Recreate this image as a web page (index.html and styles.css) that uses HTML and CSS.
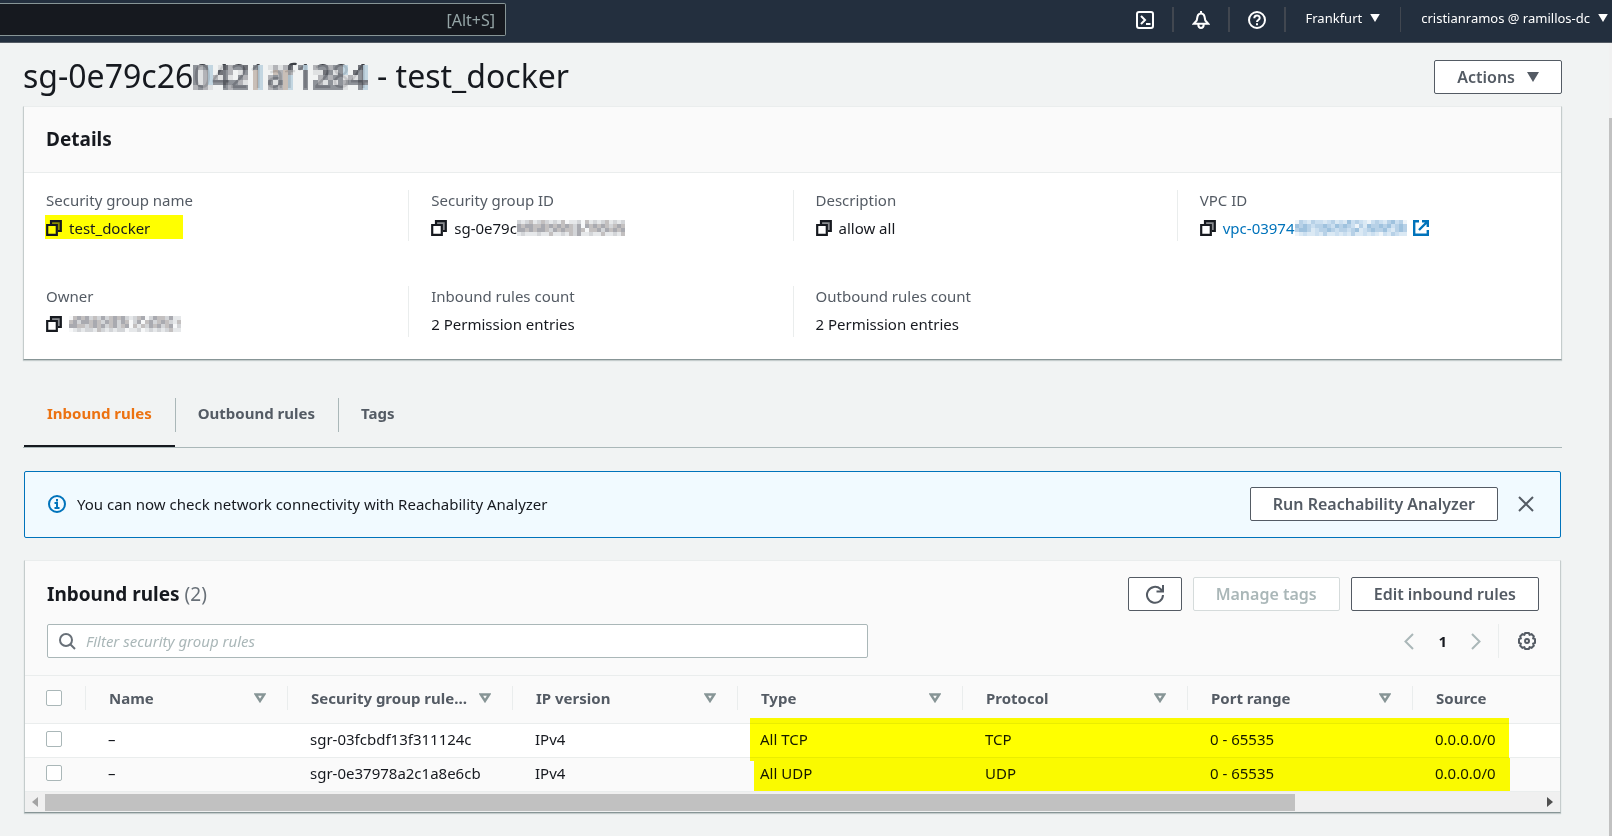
FILE: index.html
```html
<!DOCTYPE html>
<html lang="en">
<head>
<meta charset="utf-8">
<title>Security group</title>
<link rel="stylesheet" href="styles.css">
</head>
<body>
<svg class="defs" aria-hidden="true">
  <symbol id="copy" viewBox="0 0 16 16"><path d="M5 4V1.2h9.8V11H12" fill="#8a8c90" stroke="currentColor" stroke-width="2.200"/><path d="M1.2 5h9.6v9.8H1.2z" fill="#fff" stroke="currentColor" stroke-width="2.200"/></symbol>
  <symbol id="copy-marked" viewBox="0 0 16 16"><path d="M5 4V1.2h9.8V11H12" fill="#8a8c00" stroke="currentColor" stroke-width="2.200"/><path d="M1.2 5h9.6v9.8H1.2z" fill="#ff0" stroke="currentColor" stroke-width="2.200"/></symbol>
  <symbol id="sort" viewBox="0 0 12 10"><path d="M1.800 1.500h8.400L6 8z" fill="none" stroke="currentColor" stroke-width="2.400"/></symbol>
  <symbol id="caret" viewBox="0 0 12 10"><path d="M0 0h12L6 10z" fill="currentColor"/></symbol>
</svg>

<header class="topbar">
  <input class="top-search" type="text" placeholder="[Alt+S]" aria-label="Search">
  <nav class="top-nav">
    <button class="top-icon" aria-label="CloudShell"><svg width="18" height="18" viewBox="0 0 18 18" fill="none" stroke="currentColor" stroke-width="2"><rect x="1" y="1" width="16" height="16" rx="2"/><path d="M5 5l4 4-4 4M10 13h4.500"/></svg></button>
    <button class="top-icon" aria-label="Notifications"><svg width="18" height="18" viewBox="0 0 18 18" fill="none" stroke="currentColor" stroke-width="2"><path d="M9 0v2M1.800 12.800h14.400L13.300 9.500 12.500 5.500C12 3.500 10.800 2.500 9 2.500S6 3.500 5.500 5.500L4.700 9.500zM6.300 13.500c0 4.600 5.400 4.600 5.400 0"/></svg></button>
    <button class="top-icon" aria-label="Help"><svg width="18" height="18" viewBox="0 0 18 18" fill="none" stroke="currentColor" stroke-width="2"><circle cx="9" cy="9" r="8"/><path d="M6.300 7.200C6.300 3.500 11.700 3.600 11.700 7c0 2-2.700 2-2.700 4M9 12.300v2"/></svg></button>
    <button class="top-text">Frankfurt <svg width="10" height="8"><use href="#caret"/></svg></button>
    <button class="top-text user">cristianramos @ ramillos-dc <svg width="10" height="8"><use href="#caret"/></svg></button>
  </nav>
</header>

<div class="page">
<main class="content">
  <div class="title-row">
    <h1>sg-0e79c26<span class="masked">0421af1284<svg class="tiles" data-mosaic="title" data-tile="5"></svg></span> - test_docker</h1>
    <button class="btn actions">Actions <svg width="12" height="10"><use href="#caret"/></svg></button>
  </div>

  <section class="card details">
    <h2 class="card-head">Details</h2>
    <dl class="grid">
      <div class="cell"><dt>Security group name</dt><dd><span class="marked"><svg class="ic" width="16" height="16"><use href="#copy-marked"/></svg>test_docker</span></dd></div>
      <div class="cell"><dt>Security group ID</dt><dd><svg class="ic" width="16" height="16"><use href="#copy"/></svg>sg-0e79c<svg data-mosaic="id" data-tile="4"></svg></dd></div>
      <div class="cell"><dt>Description</dt><dd><svg class="ic" width="16" height="16"><use href="#copy"/></svg>allow all</dd></div>
      <div class="cell"><dt>VPC ID</dt><dd><svg class="ic" width="16" height="16"><use href="#copy"/></svg><a href="#vpc">vpc-03974<svg data-mosaic="vpc" data-tile="4"></svg><svg class="ext" width="16" height="16" viewBox="0 0 16 16" fill="none" stroke="currentColor" stroke-width="2.400"><path d="M6 1.200H1.200v13.600h13.600V10M9 1.200h5.800V7M14.500 1.500L6 10"/></svg></a></dd></div>
      <div class="cell"><dt>Owner</dt><dd><svg class="ic" width="16" height="16"><use href="#copy"/></svg><svg data-mosaic="owner" data-tile="4"></svg></dd></div>
      <div class="cell"><dt>Inbound rules count</dt><dd>2 Permission entries</dd></div>
      <div class="cell"><dt>Outbound rules count</dt><dd>2 Permission entries</dd></div>
    </dl>
  </section>

  <nav class="tabs">
    <a class="tab active" href="#inbound">Inbound rules</a>
    <a class="tab" href="#outbound">Outbound rules</a>
    <a class="tab" href="#tags">Tags</a>
  </nav>

  <div class="alert" role="status">
    <svg width="18" height="18" viewBox="0 0 18 18" fill="none" stroke="currentColor" stroke-width="2"><circle cx="9" cy="9" r="8"/><path d="M9 4v2.500M6.500 8H9v5M6.500 13h5"/></svg>
    <p>You can now check network connectivity with Reachability Analyzer</p>
    <button class="btn">Run Reachability Analyzer</button>
    <button class="plain close" aria-label="Dismiss"><svg width="16" height="16" viewBox="0 0 16 16" stroke="currentColor" stroke-width="2"><path d="M1 1l14 14M15 1L1 15"/></svg></button>
  </div>

  <section class="card rules">
    <div class="rules-head">
      <div class="bar">
        <h2>Inbound rules <span class="count">(2)</span></h2>
        <button class="btn refresh" aria-label="Refresh"><svg width="20" height="20" viewBox="0 0 20 20" fill="none" stroke="currentColor" stroke-width="2"><path d="M18 11A8 8 0 1 1 15.500 5L17.500 7M18 1v6.500h-6.500"/></svg></button>
        <button class="btn" disabled>Manage tags</button>
        <button class="btn">Edit inbound rules</button>
      </div>
      <div class="bar filter-bar">
        <label class="filter"><svg width="17" height="17" viewBox="0 0 17 17" fill="none" stroke="currentColor" stroke-width="2"><circle cx="7" cy="7" r="6"/><path d="M11 11l5 5"/></svg><input type="text" placeholder="Filter security group rules" aria-label="Filter security group rules"></label>
        <div class="pager">
          <button class="plain pale" aria-label="Previous page"><svg width="10" height="17" viewBox="0 0 10 17" fill="none" stroke="currentColor" stroke-width="2"><path d="M9 1L1.500 8.500 9 16"/></svg></button>
          <button class="plain page-no">1</button>
          <button class="plain pale" aria-label="Next page"><svg width="10" height="17" viewBox="0 0 10 17" fill="none" stroke="currentColor" stroke-width="2"><path d="M1 1l7.500 7.500L1 16"/></svg></button>
          <button class="plain gear" aria-label="Settings"><svg width="18" height="18" viewBox="0 0 18 18" fill="none" stroke="currentColor" stroke-width="2"><circle cx="9" cy="9" r="2"/><path d="M7.200 1h3.600l.8 1.800 2-.6 2.200 2.200-.6 2L17 7.200v3.600l-1.800.8.6 2-2.200 2.200-2-.6-.8 1.800H7.200l-.8-1.800-2 .6-2.200-2.200.6-2L1 10.800V7.200l1.800-.8-.6-2 2.200-2.200 2 .6z"/></svg></button>
        </div>
      </div>
    </div>
    <div class="table-wrap">
      <table>
        <colgroup><col class="c-check"><col class="c-name"><col class="c"><col class="c"><col class="c"><col class="c"><col class="c"><col></colgroup>
        <thead><tr>
          <th><input type="checkbox" aria-label="Select all"></th>
          <th><div>Name<svg width="12" height="10"><use href="#sort"/></svg></div></th>
          <th><div>Security group rule…<svg width="12" height="10"><use href="#sort"/></svg></div></th>
          <th><div>IP version<svg width="12" height="10"><use href="#sort"/></svg></div></th>
          <th><div>Type<svg width="12" height="10"><use href="#sort"/></svg></div></th>
          <th><div>Protocol<svg width="12" height="10"><use href="#sort"/></svg></div></th>
          <th><div>Port range<svg width="12" height="10"><use href="#sort"/></svg></div></th>
          <th><div>Source</div></th>
        </tr></thead>
        <tbody>
          <tr><td><input type="checkbox" aria-label="Select sgr-03fcbdf13f311124c"></td><td>–</td><td>sgr-03fcbdf13f311124c</td><td>IPv4</td><td>All TCP</td><td>TCP</td><td>0 - 65535</td><td>0.0.0.0/0</td></tr>
          <tr><td><input type="checkbox" aria-label="Select sgr-0e37978a2c1a8e6cb"></td><td>–</td><td>sgr-0e37978a2c1a8e6cb</td><td>IPv4</td><td>All UDP</td><td>UDP</td><td>0 - 65535</td><td>0.0.0.0/0</td></tr>
        </tbody>
      </table>
      <div class="marker first"></div>
      <div class="marker second"></div>
    </div>
    <div class="hscroll"><svg width="6" height="10"><path d="M6 0v10L0 5z" fill="#a3a3a3"/></svg><div class="track"><div class="thumb"></div></div><svg width="6" height="10"><path d="M0 0v10l6-5z" fill="#505050"/></svg></div>
  </section>
</main>
<div class="vscroll"><div class="vthumb"></div></div>
</div>
<script src="mosaic.js"></script>
</body>
</html>
```
FILE: mosaic.js
```js
// Paints the pixelated masks over private identifiers, one letter per tile.
const colours = {
  K: "#5c5f66", D: "#7f838a", M: "#a8a9ad", T: "#c3b6ad", B: "#bcd2df", L: "#dddee0", ".": "#f1f3f3",
  a: "#a9aab0", b: "#c3c0c0", c: "#d3d5d8", d: "#e6e8ea", e: "#f7f8f9",
  p: "#9fc2de", q: "#b7d1e7", r: "#cbdff0", s: "#dbe9f4", t: "#eef4f9"
};
const maps = {
  title: [
    "DMDB.LKMDDK.DB.LMLMK.DB.MDDMDDB..KB",
    "DLMB.KDM.LD.TB..TMTM..D.LLKDLDB.KDB",
    "DLMBMLDL.DM.TB.MDMTB..D..MDMDDLMLDB",
    "DLMBDDKDDML.TB.DLDTB..D.DMLDLDMDDKD",
    "MDML..DMDDD.TB.MDMTB..D.DDDDDDL..DB"
  ],
  id: ["cdcbdcbcdcdbeddcebdcdcbdcdc", "abaabbababababcaeabababcbab", "aababaabcababbcabebbacababa", "dcdddcddbddcdbcaddcddbddcdb"],
  owner: ["ebabacbcacbabacdcbaecabbcadd", "bacaababcabacabecaebacbabcdb", "aabbcbabacbacbaebdbcabacbaec", "edcdccdbcdcdcceddcedcdcdcbdd"],
  vpc: ["tqrsqrrsrqsrsprqrstrqrsqprqt", "pqpqrqqpqrpqpqrtqspqqpqprqpq", "qppqsrqqpqrqqrqpsrqpqqprsqpq", "tsrssrsqssrsrsqssrsrstrsqrss"]
};
document.querySelectorAll("[data-mosaic]").forEach(svg => {
  const rows = maps[svg.dataset.mosaic];
  const size = Number(svg.dataset.tile);
  svg.setAttribute("width", rows[0].length * size);
  svg.setAttribute("height", rows.length * size);
  rows.forEach((row, y) => [...row].forEach((key, x) => {
    const tile = document.createElementNS("http://www.w3.org/2000/svg", "rect");
    Object.entries({ x: x * size, y: y * size, width: size, height: size, fill: colours[key] })
      .forEach(([name, value]) => tile.setAttribute(name, value));
    svg.append(tile);
  }));
});
```
FILE: styles.css
```css
* { box-sizing: border-box; }
body { margin: 0; min-height: 100vh; display: flex; flex-direction: column; background: #f1f3f3; color: #16191f; font: 15px/20px "Noto Sans", "Open Sans", sans-serif; overflow: hidden; }
h1, h2, p, dl, dd { margin: 0; }
svg { flex: none; }
button { font: inherit; color: inherit; cursor: pointer; white-space: nowrap; }
a { color: #0073bb; text-decoration: none; }
.defs { position: absolute; width: 0; height: 0; }

.topbar { display: flex; align-items: flex-start; justify-content: space-between; height: 43px; background: #232f3e; border-bottom: 1px solid #545b64; color: #fff; }
.top-search { width: 506px; height: 33px; margin-top: 3px; padding: 0 10px; border: 1px solid #879596; border-left: 0; border-radius: 0 2px 2px 0; background: #16191f; font: 16px/20px "Noto Sans", sans-serif; text-align: right; }
.top-search::placeholder { color: #95a5a6; opacity: 1; }
.top-nav { display: flex; padding-top: 7px; }
.top-nav button { display: flex; align-items: center; height: 25px; padding: 0; border: 0; background: none; }
.top-nav .top-icon { width: 56px; padding: 0 18px; border-right: 2px solid #414750; }
.top-nav .top-text { gap: 8px; padding: 0 20px 3px; font-size: 13px; }
.top-nav .user { padding-right: 4px; border-left: 1px solid #414750; }

.page { flex: 1; display: flex; }
.content { flex: 1; min-width: 0; padding: 17px 47px 23px 23px; }
.vscroll { width: 3px; padding-top: 75px; background: #f1f1f1; display: flex; }
.vthumb { flex: 1; background: #c1c1c1; }

.title-row { display: flex; align-items: center; justify-content: space-between; margin-bottom: 12px; }
h1 { padding-bottom: 3px; font-size: 32px; line-height: 31px; font-weight: 400; white-space: nowrap; }
.masked { position: relative; color: #3c3f45; }
.tiles { position: absolute; left: 0; top: 11px; opacity: .85; }
.btn { display: flex; align-items: center; justify-content: center; height: 34px; padding: 0 22px; border: 1px solid #545b64; border-radius: 2px; background: #fff; color: #545b64; font-size: 16px; font-weight: 600; }
.btn:disabled { border-color: #d5dbdb; color: #aab7b8; }
.actions { gap: 12px; }

.card { background: #fff; border: 1px solid #eaeded; border-bottom-color: #879596; border-left-color: #c5cccc; border-right-color: #c5cccc; box-shadow: 0 1px 1px #c5cccc; }
h2 { font-size: 19px; line-height: 22px; font-weight: 700; }
.card-head { padding: 21px 22px 22px; background: #fafafa; border-bottom: 1px solid #eaeded; }
.grid { display: grid; grid-template-columns: repeat(4, 1fr); row-gap: 45px; padding: 17px 0 22px; }
.cell { height: 51px; padding: 0 22px; }
.cell:not(:nth-child(4n + 1)) { border-left: 1px solid #eaeded; }
dt { color: #545b64; line-height: 20px; }
dd { display: flex; align-items: center; height: 24px; margin-top: 6px; white-space: pre; }
dd a { display: flex; align-items: center; }
.ic { margin-right: 7px; }
.ext { margin-left: 6px; }
.marked { display: flex; align-items: center; height: 24px; width: 138px; margin: 0 0 2px -1px; padding: 2px 0 0 1px; background: #ff0; }

.tabs { display: flex; margin-top: 38px; padding-left: 1px; border-bottom: 1px solid #aab7b8; }
.tab { position: relative; padding: 5px 23px 24px; font-weight: 700; color: #545b64; }
.tab + .tab::before { content: ""; position: absolute; left: 0; top: 0; height: 34px; border-left: 1px solid #aab7b8; }
.active { padding-bottom: 22px; border-bottom: 2px solid #16191f; color: #ec7211; }

.alert { display: flex; align-items: center; margin: 23px 1px 22px; height: 67px; padding: 0 23px 2px; border: 1px solid #0073bb; border-radius: 2px; background: #f1faff; color: #0073bb; }
.alert p { flex: 1; margin-left: 11px; color: #16191f; }
.plain { display: flex; align-items: center; padding: 0; border: 0; background: none; color: #545b64; }
.close { margin: 0 3px 0 20px; }

.rules { margin: 0 1px; }
.rules-head { padding: 16px 21px 17px 22px; background: #fafafa; border-bottom: 1px solid #eaeded; }
.bar { display: flex; align-items: center; gap: 11px; }
.bar h2 { flex: 1; }
.count { font-weight: 400; color: #687078; }
.refresh { width: 54px; padding: 0; }
.filter-bar { margin-top: 13px; justify-content: space-between; }
.filter { display: flex; align-items: center; gap: 10px; width: 55%; height: 34px; padding: 0 11px; border: 1px solid #aab7b8; border-radius: 2px; background: #fff; color: #687078; }
.filter input { flex: 1; min-width: 0; padding: 0; border: 0; outline: 0; font: inherit; }
.filter input::placeholder { color: #aab7b8; font-style: italic; opacity: 1; }
.pager { display: flex; align-items: center; height: 34px; }
.pale { color: #aab7b8; }
.page-no { margin: 0 24px; font-weight: 700; color: #16191f; }
.gear { height: 34px; margin-left: 17px; padding: 0 3px 0 19px; border-left: 1px solid #eaeded; }

.table-wrap { position: relative; }
table { width: 100%; table-layout: fixed; border-collapse: collapse; white-space: nowrap; }
.c-check { width: 60px; }
.c-name { width: 202px; }
.c { width: 225px; }
th, td { padding: 0 0 2px 23px; text-align: left; }
th:first-child, td:first-child { padding-left: 21px; }
thead { background: #fafafa; }
th { height: 47px; font-weight: 700; color: #545b64; }
th div { display: flex; align-items: center; justify-content: space-between; height: 24px; margin-left: -23px; padding: 0 21px 0 23px; border-left: 1px solid #eaeded; }
th svg { color: #879596; }
td { height: 34px; border-top: 1px solid #eaeded; }
tbody tr:nth-child(2) { background: #fafafa; }
input[type="checkbox"] { display: block; appearance: none; width: 16px; height: 16px; margin: 0; border: 1px solid #aab7b8; border-radius: 2px; background: #fff; }
.marker { position: absolute; background: #ff0; mix-blend-mode: multiply; pointer-events: none; }
.first { left: 725px; right: 51px; top: 42px; height: 43px; }
.second { left: 729px; right: 50px; top: 82px; bottom: 0; }
.hscroll { display: flex; align-items: center; height: 21px; padding: 0 7px; gap: 7px; background: #f0f0f0; border-top: 1px solid #eaeded; }
.track { flex: 1; }
.thumb { width: 83.6%; height: 17px; background: #c1c1c1; }
```
